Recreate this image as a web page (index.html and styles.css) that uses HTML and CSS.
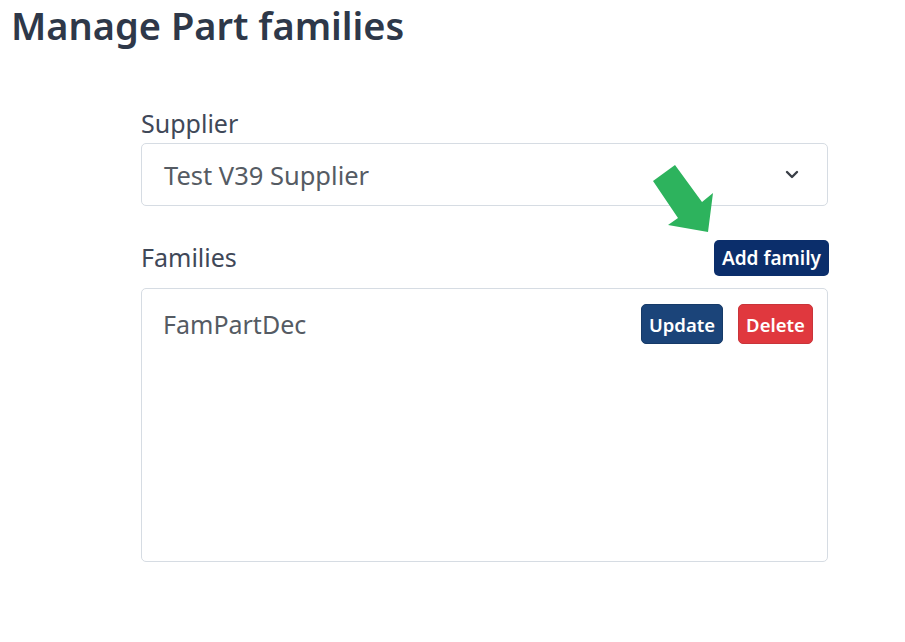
FILE: index.html
```html
<!DOCTYPE html>
<html lang="en">
<head>
<meta charset="utf-8">
<title>Manage Part families</title>
<link rel="stylesheet" href="styles.css">
</head>
<body>
<h1 class="page-title">Manage Part families</h1>
<main class="form-wrap">
  <div class="field">
    <label class="field-label" for="supplier">Supplier</label>
    <div class="select-box" id="supplier">
      <span class="select-value">Test V39 Supplier</span>
      <svg class="chevron" width="14" height="9" viewBox="0 0 14 9"><path d="M2 2 L7 7 L12 2" fill="none" stroke="#3a3f47" stroke-width="2.4" stroke-linecap="round" stroke-linejoin="round"/></svg>
    </div>
  </div>
  <div class="families-head">
    <span class="field-label families-label">Families</span>
    <button class="btn btn-add">Add family</button>
  </div>
  <div class="list-box">
    <div class="list-row">
      <span class="item-name">FamPartDec</span>
      <div class="row-actions">
        <button class="btn btn-update">Update</button>
        <button class="btn btn-delete">Delete</button>
      </div>
    </div>
  </div>
</main>
<svg class="pointer-arrow" width="905" height="642" viewBox="0 0 905 642"><polygon points="653,181 675,165 702,202 713,193 708,232 668,225 678,218" fill="#2db35d"/></svg>
</body>
</html>
```
FILE: styles.css
```css
*, *::before, *::after {
  box-sizing: border-box;
}
html, body {
  margin: 0;
  padding: 0;
  background: #ffffff;
}
body {
  font-family: "Noto Sans", "Open Sans", sans-serif;
  color: #3b4352;
  position: relative;
  width: 905px;
  height: 642px;
  overflow: hidden;
}
.page-title {
  margin: 0;
  padding: 0 0 0 11px;
  font-size: 38px;
  font-weight: 600;
  color: #2e3849;
  line-height: 50px;
}
.form-wrap {
  width: 687px;
  margin: 57px 0 0 141px;
}
.field-label {
  display: block;
  font-size: 25px;
  line-height: 32px;
  color: #3f4858;
}
.families-label {
  margin-bottom: 3px;
}
.select-box {
  margin-top: 4px;
  height: 63px;
  border: 1px solid #d6dce3;
  border-radius: 5px;
  display: flex;
  align-items: center;
  justify-content: space-between;
  padding: 0 28px 0 22px;
}
.select-value {
  font-size: 25.5px;
  color: #555b63;
}
.chevron {
  display: block;
}
.families-head {
  display: flex;
  justify-content: space-between;
  align-items: flex-end;
  margin-top: 34px;
}
.btn {
  border: none;
  color: #ffffff;
  font-family: "Noto Sans", "Open Sans", sans-serif;
  font-weight: 600;
  font-size: 18.5px;
  border-radius: 5px;
  padding: 0;
  cursor: pointer;
}
.btn-add {
  background: #0b2e6b;
  height: 36px;
  width: 115px;
  margin-right: -1px;
  font-size: 19px;
}
.list-box {
  margin-top: 12px;
  height: 274px;
  border: 1px solid #d6dce3;
  border-radius: 5px;
}
.list-row {
  display: flex;
  justify-content: space-between;
  align-items: center;
  padding: 15px 14px 0 21px;
}
.item-name {
  font-size: 25px;
  color: #555b63;
}
.row-actions {
  display: flex;
  gap: 15px;
}
.btn-update {
  background: #1b4479;
  height: 40px;
  width: 82px;
  border: 1px solid #163a68;
}
.btn-delete {
  background: #e0383e;
  height: 40px;
  width: 75px;
  border: 1px solid #c9343a;
}
.pointer-arrow {
  position: absolute;
  left: 0;
  top: 0;
  pointer-events: none;
}
```
